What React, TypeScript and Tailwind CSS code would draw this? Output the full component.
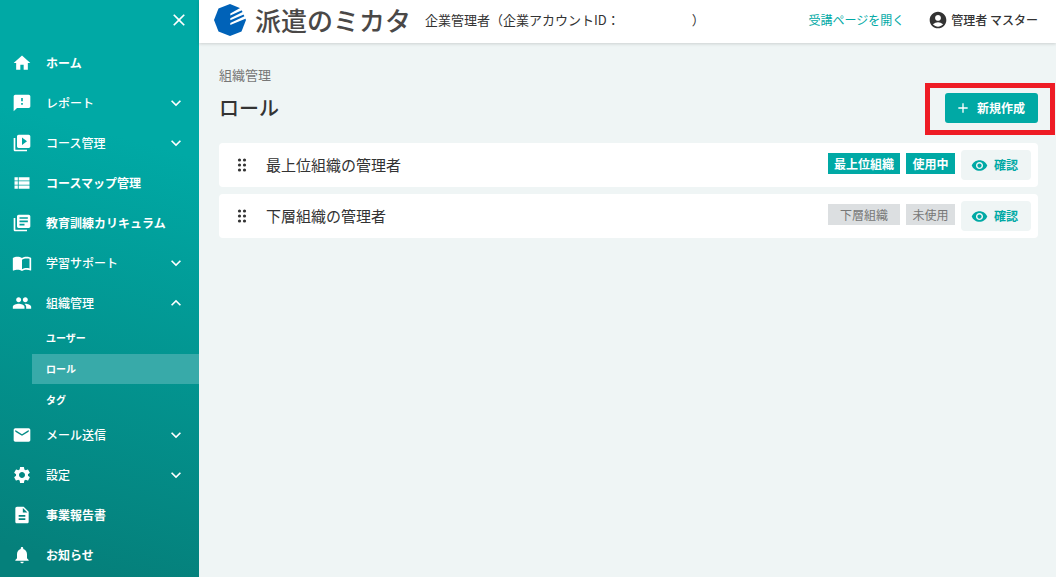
import type { ReactNode } from "react";
import {
  MdAccountCircle,
  MdAdd,
  MdClose,
  MdDescription,
  MdExpandLess,
  MdExpandMore,
  MdFeedback,
  MdHome,
  MdLibraryBooks,
  MdMail,
  MdNotifications,
  MdPeople,
  MdSettings,
  MdVideoLibrary,
  MdViewList,
  MdVisibility,
} from "react-icons/md";

type MenuItem = {
  label: string;
  icon: ReactNode;
  expandable?: boolean;
  children?: { label: string; active?: boolean }[];
};

const OpenBookIcon = () => (
  <svg viewBox="0 0 24 24" width="20" height="20" fill="currentColor" aria-hidden="true">
    <path d="M21 5c-1.11-.35-2.33-.5-3.5-.5-1.95 0-4.05.4-5.5 1.5-1.45-1.1-3.55-1.5-5.5-1.5S2.45 4.9 1 6v14.65c0 .25.25.5.5.5.1 0 .15-.05.25-.05C3.1 20.45 5.05 20 6.5 20c1.95 0 4.05.4 5.5 1.5 1.35-.85 3.8-1.5 5.5-1.5 1.65 0 3.35.3 4.75 1.05.1.05.15.05.25.05.25 0 .5-.25.5-.5V6c-.6-.45-1.25-.75-2-1zm0 13.5c-1.1-.35-2.3-.5-3.5-.5-1.7 0-4.15.65-5.5 1.5V8c1.35-.85 3.8-1.5 5.5-1.5 1.2 0 2.4.15 3.5.5v11.5z" />
  </svg>
);

const DragIcon = () => (
  <svg viewBox="0 0 10 14" width="10" height="14" fill="currentColor" aria-hidden="true">
    {[2, 7, 12].map((y) => (
      <g key={y}>
        <circle cx="2.5" cy={y} r="1.6" />
        <circle cx="7.5" cy={y} r="1.6" />
      </g>
    ))}
  </svg>
);

const LogoMark = () => (
  <svg viewBox="0 0 32 32" width="32" height="32" aria-hidden="true">
    <path d="M16 0 27 4.5 32 16 27.5 27.5 16 32 4.5 27.5 0 16 4.5 4.5Z" fill="#0062b8" />
    <g fill="#fff">
      <path d="M16.3 9.4 27 3.4 29 5.8 16.3 11.4Z" />
      <path d="M16.3 14.2 29.6 7.6 31 10 16.3 16.2Z" />
      <path d="M16.3 19 31 12 32 14.6 16.3 20.9Z" />
    </g>
  </svg>
);

const menu: MenuItem[] = [
  { label: "ホーム", icon: <MdHome size={20} /> },
  { label: "レポート", icon: <MdFeedback size={20} />, expandable: true },
  { label: "コース管理", icon: <MdVideoLibrary size={20} />, expandable: true },
  { label: "コースマップ管理", icon: <MdViewList size={20} /> },
  { label: "教育訓練カリキュラム", icon: <MdLibraryBooks size={20} /> },
  { label: "学習サポート", icon: <OpenBookIcon />, expandable: true },
  {
    label: "組織管理",
    icon: <MdPeople size={20} />,
    expandable: true,
    children: [{ label: "ユーザー" }, { label: "ロール", active: true }, { label: "タグ" }],
  },
  { label: "メール送信", icon: <MdMail size={20} />, expandable: true },
  { label: "設定", icon: <MdSettings size={20} />, expandable: true },
  { label: "事業報告書", icon: <MdDescription size={20} /> },
  { label: "お知らせ", icon: <MdNotifications size={20} /> },
];

const roles = [
  { name: "最上位組織の管理者", level: "最上位組織", status: "使用中", active: true },
  { name: "下層組織の管理者", level: "下層組織", status: "未使用", active: false },
];

const Sidebar = () => (
  <aside className="w-[199px] shrink-0 bg-[linear-gradient(195deg,#00a9a5_25%,#05807b_95%)] text-white">
    <div className="flex h-[43px] items-center justify-end pr-[10px] pb-[3px]">
      <button type="button" aria-label="閉じる">
        <MdClose size={20} />
      </button>
    </div>
    <nav>
      <ul>
        {menu.map((item) => (
          <li key={item.label}>
            {item.expandable ? (
              <button
                type="button"
                aria-expanded={!!item.children}
                className="flex h-10 w-full items-center gap-[14px] pr-[13px] pl-3 text-left text-xs font-medium"
              >
                {item.icon}
                <span className="flex-1">{item.label}</span>
                {item.children ? <MdExpandLess size={20} /> : <MdExpandMore size={20} />}
              </button>
            ) : (
              <a href="#" className="flex h-10 items-center gap-[14px] pl-3 text-xs font-bold">
                {item.icon}
                <span>{item.label}</span>
              </a>
            )}
            {item.children && (
              <ul className="flex flex-col gap-px pl-8">
                {item.children.map((child) => (
                  <li key={child.label}>
                    <a
                      href="#"
                      className={`flex h-[30px] items-center pb-px pl-[14px] text-[10px] font-bold ${
                        child.active ? "bg-[#38aaa9]" : ""
                      }`}
                    >
                      {child.label}
                    </a>
                  </li>
                ))}
              </ul>
            )}
          </li>
        ))}
      </ul>
    </nav>
  </aside>
);

const Header = () => (
  <header className="flex h-[43px] items-center bg-white pr-[18px] pb-[3px] pl-[15px] shadow-[0_1px_3px_rgba(0,0,0,0.15)]">
    <a href="#" className="flex items-center gap-[9px]">
      <LogoMark />
      <span className="text-[26px] leading-8 font-medium text-[#4a4847]">派遣のミカタ</span>
    </a>
    <p className="ml-[14px] text-[13px]">
      企業管理者（企業アカウントID：
      <span className="inline-block w-[72px]" />）
    </p>
    <a href="#" className="ml-auto text-xs text-[#00a9a5]">
      受講ページを開く
    </a>
    <button type="button" className="ml-6 flex items-center gap-[3px] text-xs font-medium">
      <MdAccountCircle size={20} />
      管理者 マスター
    </button>
  </header>
);

const RoleRow = ({ name, level, status, active }: (typeof roles)[number]) => {
  const badge = active ? "bg-[#00a9a5] font-bold text-white" : "bg-[#dcdfe1] text-[#777]";
  return (
    <li className="flex h-11 items-center rounded bg-white pr-[7px] pl-[18px]">
      <DragIcon />
      <span className="ml-[19px] flex-1 text-[15px]">{name}</span>
      <div className="mr-[6px] flex gap-[6px] pb-[3px] text-xs">
        <span className={`flex h-[21px] w-[72px] items-center justify-center ${badge}`}>{level}</span>
        <span className={`flex h-[21px] w-[49px] items-center justify-center ${badge}`}>{status}</span>
      </div>
      <button
        type="button"
        className="flex h-[30px] w-[70px] items-center gap-[6px] rounded bg-[#eff5f5] pl-[10px] text-xs font-bold text-[#00a9a5]"
      >
        <MdVisibility size={17} />
        確認
      </button>
    </li>
  );
};

const App = () => {
  return (
    <div
      lang="ja"
      className="flex min-h-screen bg-[#eff5f5] font-['Noto_Sans_CJK_JP',sans-serif] text-[#333]"
    >
      <Sidebar />
      <div className="min-w-0 flex-1">
        <Header />
        <main className="pt-[22px] pr-[18px] pl-5">
          <p className="text-[13px] leading-5 text-[#777]">組織管理</p>
          <div className="mt-2 flex h-[30px] items-center justify-between">
            <h1 className="text-xl font-medium">ロール</h1>
            <div className="relative">
              <button
                type="button"
                className="flex h-[30px] w-[93px] items-center gap-[6px] rounded-[3px] bg-[#00a9a5] pl-[10px] text-xs font-bold text-white"
              >
                <MdAdd size={16} />
                新規作成
              </button>
              <span className="pointer-events-none absolute -top-[10px] -right-[17px] -bottom-3 -left-5 border-5 border-[#ee1c25]" />
            </div>
          </div>
          <ul className="mt-5 flex flex-col gap-[7px]">
            {roles.map((role) => (
              <RoleRow key={role.name} {...role} />
            ))}
          </ul>
        </main>
      </div>
    </div>
  );
};

export default App;
